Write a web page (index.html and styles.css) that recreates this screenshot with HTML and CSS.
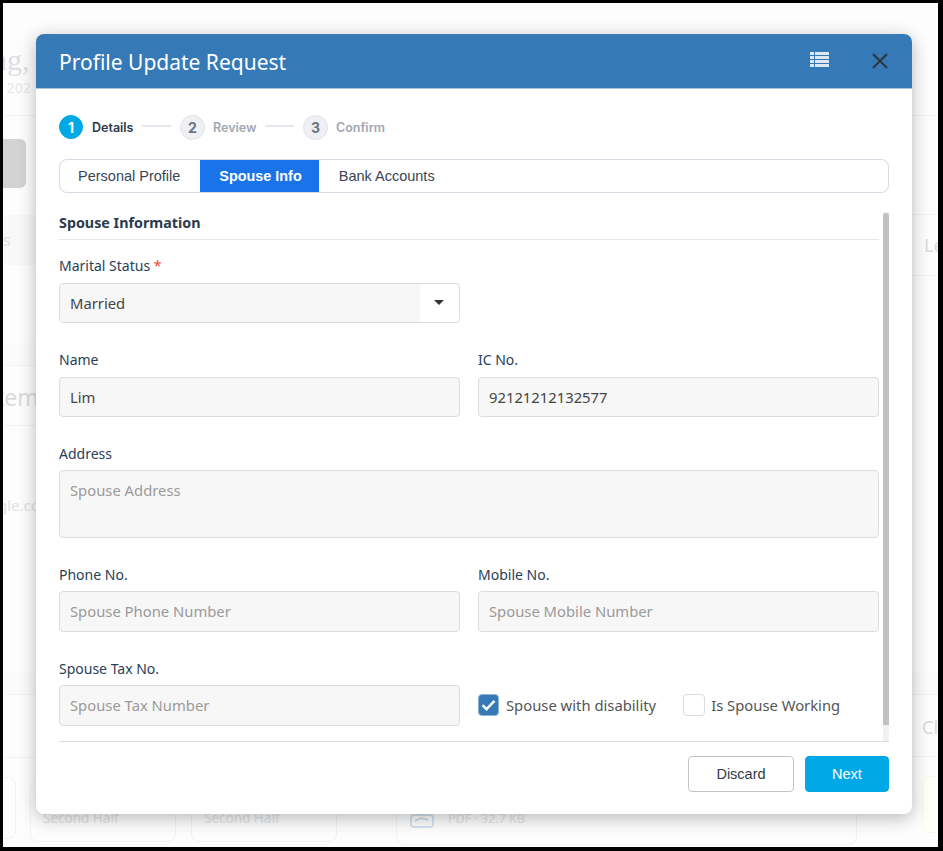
FILE: index.html
```html
<!DOCTYPE html>
<html>
<head>
<meta charset="utf-8">
<title>Profile Update Request</title>
<link rel="stylesheet" href="styles.css">
</head>
<body>
  <div class="frame">
    <!-- page behind the dialog, only the edges show -->
    <div class="backdrop">
      <div class="back-left">
        <div class="back-head">
          <div class="greeting">ng,</div>
          <div class="greeting-date">t 202</div>
        </div>
        <div class="back-button"></div>
        <div class="back-band">s</div>
        <div class="back-thin back-thin-first"></div>
        <div class="back-heading">tem</div>
        <div class="back-mail">gle.co</div>
        <div class="back-thin back-thin-low"></div>
        <div class="back-rule"></div>
        <div class="half-stub"></div>
      </div>
      <div class="back-bottom">
        <div class="half-card">Second Half</div>
        <div class="half-card">Second Half</div>
        <div class="file-card">
          <svg class="file-icon" width="24" height="14" viewBox="0 0 24 14"><rect x="1" y="1" width="22" height="12" rx="3" fill="none" stroke="#c9dcec" stroke-width="1.5"/><path d="M5 7l6-3 7 2" fill="none" stroke="#c9dcec" stroke-width="1.5"/></svg>
          <span>PDF · 32.7 KB</span>
        </div>
      </div>
      <div class="back-right">
        <div class="back-right-head"></div>
        <div class="back-title">Le</div>
        <div class="back-thin back-thin-right"></div>
        <div class="back-title-low">Cl</div>
        <div class="back-note"></div>
      </div>
    </div>

    <div class="modal">
      <div class="modal-header">
        <h1>Profile Update Request</h1>
        <svg class="list-icon" width="19" height="15" viewBox="0 0 19 15">
          <path d="M0 0h4v3H0zM5 0h14v3H5zM0 4h4v3H0zM5 4h14v3H5zM0 8h4v3H0zM5 8h14v3H5zM0 12h4v3H0zM5 12h14v3H5z" fill="#dbe8f4"/>
        </svg>
        <svg class="close-icon" width="16" height="16" viewBox="0 0 16 16">
          <path d="M1 1l14 14M15 1L1 15" stroke="#2f3438" stroke-width="1.8" fill="none"/>
        </svg>
      </div>

      <div class="modal-body">
        <div class="steps">
          <span class="step-num step-active">1</span>
          <span class="step-name step-name-active">Details</span>
          <span class="step-line"></span>
          <span class="step-num">2</span>
          <span class="step-name">Review</span>
          <span class="step-line"></span>
          <span class="step-num">3</span>
          <span class="step-name">Confirm</span>
        </div>

        <div class="tabs">
          <div class="tab">Personal Profile</div>
          <div class="tab tab-active">Spouse Info</div>
          <div class="tab tab-last">Bank Accounts</div>
        </div>

        <div class="scroll-wrap">
          <div class="form-area">
            <div class="section-title">Spouse Information</div>

            <div class="form-grid">
              <div class="field field-low">
                <label>Marital Status <span class="req">*</span></label>
                <div class="select-box">
                  <span class="select-value">Married</span>
                  <span class="select-arrow"></span>
                </div>
              </div>
              <div></div>

              <div class="field">
                <label>Name</label>
                <input type="text" value="Lim">
              </div>
              <div class="field">
                <label>IC No.</label>
                <input type="text" value="92121212132577">
              </div>

              <div class="field field-wide field-low">
                <label>Address</label>
                <textarea placeholder="Spouse Address"></textarea>
              </div>

              <div class="field field-low">
                <label>Phone No.</label>
                <input class="tall" type="text" placeholder="Spouse Phone Number">
              </div>
              <div class="field field-low">
                <label>Mobile No.</label>
                <input class="tall" type="text" placeholder="Spouse Mobile Number">
              </div>

              <div class="field field-low">
                <label>Spouse Tax No.</label>
                <input class="tall" type="text" placeholder="Spouse Tax Number">
              </div>
              <div class="checks">
                <div class="check-item">
                  <span class="check-box checked">
                    <svg width="15" height="12" viewBox="0 0 15 12"><path d="M1.5 6.2l4 4 8-8.4" fill="none" stroke="#fff" stroke-width="2.4"/></svg>
                  </span>
                  Spouse with disability
                </div>
                <div class="check-item">
                  <span class="check-box check-empty"></span>
                  Is Spouse Working
                </div>
              </div>
            </div>
          </div>
          <div class="scrollbar"><div class="scroll-thumb"></div></div>
        </div>

        <div class="modal-footer">
          <button class="btn btn-discard">Discard</button>
          <button class="btn btn-next">Next</button>
        </div>
      </div>
    </div>
  </div>
</body>
</html>
```

FILE: styles.css
```css
* {
  box-sizing: border-box;
}

html, body {
  margin: 0;
  padding: 0;
}

body {
  font-family: "Noto Sans", sans-serif;
  background-color: #000000;
}

.frame {
  position: relative;
  width: 943px;
  height: 851px;
  border-style: solid;
  border-color: #000000;
  border-width: 3px 5px 4px 3px;
  background-color: #fdfdfd;
  overflow: hidden;
}

/* backdrop */
.backdrop {
  width: 935px;
  height: 844px;
  display: flex;
  color: #dcdfe3;
}

.back-left {
  width: 33px;
  overflow: hidden;
  white-space: nowrap;
  flex-shrink: 0;
}

.back-head {
  height: 113px;
  border-bottom: 1px solid #f3f3f3;
  padding-top: 39px;
}

.greeting {
  font-family: "Liberation Serif", serif;
  font-size: 30px;
  line-height: 36px;
  margin-left: -11px;
}

.greeting-date {
  font-size: 14px;
  line-height: 20px;
  margin-left: -5px;
  color: #e6e8ea;
}

.back-button {
  width: 23px;
  height: 49px;
  margin-top: 23px;
  background-color: #d3d3d3;
  border-radius: 0 6px 6px 0;
}

.back-band {
  height: 50px;
  margin-top: 27px;
  background-color: #f8f8f8;
  font-size: 16px;
  line-height: 50px;
  color: #dfe2e6;
}

.back-thin {
  height: 23px;
  background-color: #fbfbfb;
  border-bottom: 1px solid #f3f3f3;
}

.back-thin-first {
  margin-top: 78px;
}

.back-thin-low {
  margin-top: 156px;
}

.back-heading {
  height: 60px;
  padding-top: 17px;
  border-bottom: 1px solid #f3f3f3;
  font-size: 23px;
  line-height: 28px;
  margin-left: -7px;
  color: #d9dcdf;
}

.back-mail {
  font-size: 15px;
  line-height: 21px;
  margin-top: 69px;
  margin-left: -5px;
  color: #e0e2e5;
}

.back-rule {
  height: 63px;
  border-bottom: 1px solid #f3f3f3;
}

.half-stub {
  width: 13px;
  height: 62px;
  margin-top: 19px;
  border: 1px solid #f2f2f2;
  border-left: 0;
  border-radius: 0 8px 8px 0;
}

.back-bottom {
  width: 882px;
  margin-left: -6px;
  flex-shrink: 0;
  display: flex;
  align-items: flex-end;
  gap: 15px;
  padding-bottom: 5px;
  color: #e2e4e6;
  font-size: 13.5px;
}

.half-card {
  width: 146px;
  height: 60px;
  border: 1px solid #f2f2f2;
  border-radius: 8px;
  padding: 26px 12px 0;
  line-height: 18px;
}

.file-card {
  width: 461px;
  height: 62px;
  margin-left: 44px;
  margin-bottom: -3px;
  border: 1px solid #f2f2f2;
  border-radius: 8px;
  padding: 26px 12px 0 13px;
  display: flex;
  gap: 14px;
  font-size: 12.5px;
  line-height: 18px;
}

.file-icon {
  margin-top: 4px;
}

.back-right {
  width: 26px;
  flex-shrink: 0;
  margin-left: 0;
  overflow: hidden;
  font-size: 18px;
  color: #d8dbde;
}

.back-right-head {
  height: 113px;
  border-bottom: 1px solid #f3f3f3;
}

.back-title {
  height: 62px;
  margin-top: 98px;
  padding: 18px 0 0 12px;
  line-height: 24px;
  border-top: 1px solid #f3f3f3;
  border-bottom: 1px solid #f3f3f3;
}

.back-thin-right {
  margin-top: 396px;
}

.back-title-low {
  height: 62px;
  padding: 20px 0 0 10px;
  line-height: 24px;
  border-bottom: 1px solid #f3f3f3;
}

.back-note {
  height: 57px;
  margin: 19px 0 0 10px;
  border: 1px solid #faf6e8;
  border-right: 0;
  border-radius: 6px 0 0 6px;
  background-color: #fffef9;
}

/* dialog */
.modal {
  position: absolute;
  left: 33px;
  top: 31px;
  width: 876px;
  height: 780px;
  background-color: #ffffff;
  border-radius: 8px;
  box-shadow: 0 4px 18px rgba(0, 0, 0, 0.28);
  display: flex;
  flex-direction: column;
}

.modal-header {
  height: 55px;
  flex-shrink: 0;
  background-color: #3579b7;
  border-bottom: 1px solid #a9c5de;
  border-radius: 8px 8px 0 0;
  display: flex;
  align-items: center;
  padding: 0 24px 0 23px;
}

.modal-header h1 {
  flex: 1;
  margin: 1px 0 0;
  font-size: 21px;
  font-weight: 400;
  color: #ffffff;
  line-height: 30px;
}

.list-icon {
  margin-right: 43px;
  margin-top: -4px;
}

.close-icon {
  margin-top: -1px;
}

.modal-body {
  flex: 1;
  padding: 0 23px;
  display: flex;
  flex-direction: column;
}

/* stepper */
.steps {
  height: 24px;
  margin-top: 26px;
  display: flex;
  align-items: center;
  font-family: Inter, sans-serif;
  font-size: 12.5px;
  font-weight: 600;
}

.step-num {
  width: 25px;
  height: 25px;
  border-radius: 50%;
  background-color: #eef0f4;
  border: 1px solid #dfe3ea;
  color: #6c7686;
  display: flex;
  align-items: center;
  justify-content: center;
  font-size: 14px;
  font-weight: 700;
}

.step-active {
  width: 24px;
  height: 24px;
  background-color: #00a8e6;
  border-color: #00a8e6;
  color: #ffffff;
}

.step-name {
  margin-left: 8px;
  color: #a1a8b3;
}

.step-name-active {
  margin-left: 9px;
  color: #2c3a4b;
}

.step-line {
  width: 29px;
  height: 2px;
  margin: -2px 9px 0 8.5px;
  background-color: #e4e7ee;
}

/* tabs */
.tabs {
  height: 34px;
  margin-top: 20px;
  display: flex;
  border: 1px solid #d5dae5;
  border-radius: 8px;
  overflow: hidden;
  font-family: "Liberation Sans", Arial, sans-serif;
  font-size: 14.5px;
  color: #3a4656;
}

.tab {
  padding: 0 20px 0 18px;
  line-height: 33px;
}

.tab-active {
  padding: 0 17px 0 19px;
  background-color: #1a73e8;
  color: #ffffff;
  font-size: 14.4px;
  font-weight: 700;
}

.tab-last {
  padding-left: 20px;
}

/* form */
.scroll-wrap {
  margin-top: 19px;
  height: 530px;
  display: flex;
  flex-shrink: 0;
  border-bottom: 1px solid #dddddd;
}

.form-area {
  width: 820px;
  flex-shrink: 0;
}

.section-title {
  height: 28px;
  border-bottom: 1px solid #e8e8e8;
  font-size: 14.3px;
  font-weight: 700;
  line-height: 22px;
  color: #2b3b4e;
}

.form-grid {
  display: grid;
  grid-template-columns: 401px 401px;
  column-gap: 18px;
}

.field {
  display: flex;
  flex-direction: column;
}

.field-wide {
  grid-column: 1 / 3;
}

.field label {
  height: 20px;
  margin-top: 15px;
  margin-bottom: 7px;
  font-size: 14px;
  line-height: 20px;
  color: #2a4058;
}

.field-low label {
  margin-top: 16px;
  margin-bottom: 6px;
}

.field-low:first-child label {
  margin-bottom: 7px;
}

.req {
  color: #e74c3c;
}

.field input,
.field textarea,
.select-box {
  width: 100%;
  height: 40px;
  border: 1px solid #dcdcdc;
  border-radius: 4px;
  background-color: #f7f7f7;
  font-family: "Noto Sans", sans-serif;
  font-size: 14.8px;
  color: #444444;
  padding: 0 10px;
  outline: none;
  margin: 0 0 11px;
}

.field input.tall {
  height: 41px;
  padding-bottom: 2px;
}

.field textarea {
  height: 68px;
  padding: 9px 10px;
  resize: none;
  display: block;
}

.field input::placeholder,
.field textarea::placeholder {
  color: #9a9a9a;
  opacity: 1;
}

.select-box {
  display: flex;
  padding: 0;
  margin-bottom: 12px;
  background-color: #ffffff;
  overflow: hidden;
}

.select-value {
  width: 360px;
  padding-left: 10px;
  line-height: 38px;
  background-color: #f7f7f7;
}

.select-arrow {
  width: 0;
  height: 0;
  margin: 16px 0 0 14px;
  border-left: 5px solid transparent;
  border-right: 5px solid transparent;
  border-top: 5px solid #333333;
}

.checks {
  display: flex;
  align-items: center;
  align-self: end;
  gap: 27px;
  height: 41px;
  margin-bottom: 12px;
  font-size: 14.8px;
  color: #555555;
}

.check-item {
  display: flex;
  align-items: center;
  gap: 7px;
}

.check-box {
  width: 21px;
  height: 22px;
  border: 1px solid #dcdcdc;
  border-radius: 4px;
  background-color: #ffffff;
  display: flex;
  align-items: center;
  justify-content: center;
}

.check-box.checked {
  background-color: #3579b7;
  border-color: #8fb4d6;
}

.check-box.check-empty {
  width: 22px;
  margin-right: -1px;
}

.scrollbar {
  width: 6px;
  margin-left: 4px;
  background-color: #f1f1f1;
  padding-top: 1px;
}

.scroll-thumb {
  height: 512px;
  background-color: #c1c1c1;
  border-radius: 3px 3px 0 0;
}

/* footer */
.modal-footer {
  display: flex;
  justify-content: flex-end;
  gap: 11px;
  margin-top: 14px;
}

.btn {
  height: 36px;
  border-radius: 4px;
  font-family: "Liberation Sans", Arial, sans-serif;
  font-size: 14.5px;
  cursor: pointer;
}

.btn-discard {
  width: 106px;
  background-color: #ffffff;
  border: 1px solid #c4c4c4;
  color: #333a45;
}

.btn-next {
  width: 84px;
  background-color: #00a8e6;
  border: 1px solid #00a8e6;
  color: #ffffff;
}
```
